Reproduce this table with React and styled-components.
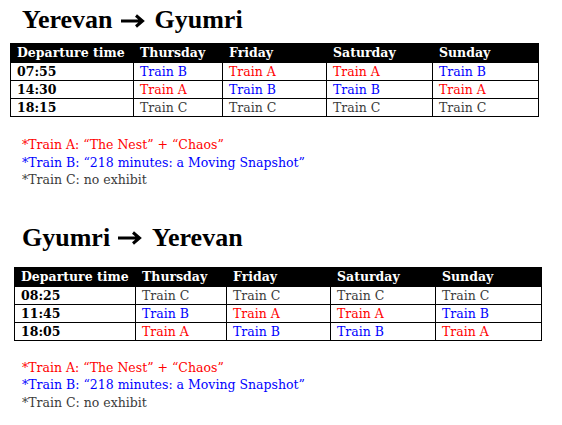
import styled, { createGlobalStyle } from "styled-components";

const GlobalStyle = createGlobalStyle`
  html, body {
    margin: 0;
    padding: 0;
    background: #ffffff;
  }
  body {
    font-family: "DejaVu Serif", "Liberation Serif", serif;
    color: #000;
  }
`;

const Page = styled.div`
  width: 562px;
  height: 425px;
  overflow: hidden;
  padding-top: 5px;
  box-sizing: border-box;
`;

const Section = styled.section`
  margin-bottom: ${({ $gap }) => $gap}px;
`;

const Title = styled.h1`
  display: flex;
  align-items: center;
  margin: 0 0 0 ${({ $left }) => $left}px;
  font-family: "Liberation Serif", "DejaVu Serif", serif;
  font-size: 26px;
  line-height: 30px;
  font-weight: bold;
`;

const ArrowIcon = styled.svg`
  width: 26px;
  height: 14px;
  margin: 1px 9px 0 7px;
  flex: none;
`;

const Table = styled.table`
  margin: ${({ $top }) => $top}px 0 0 ${({ $left }) => $left}px;
  border-collapse: collapse;
  table-layout: fixed;
  font-size: 12.5px;
`;

const HeadCell = styled.th`
  background: #000;
  color: #fff;
  text-align: left;
  font-weight: bold;
  height: 18px;
  padding: 0 0 0 6px;
  border: 1px solid #000;
  line-height: 18px;
  white-space: nowrap;
`;

const TimeCell = styled.td`
  font-weight: bold;
  height: 17px;
  padding: 0 0 0 6px;
  border: 1px solid #000;
  line-height: 17px;
`;

const TRAIN_COLORS = { A: "#ff0000", B: "#0000ff", C: "#3b3b3b" };

const TrainCell = styled.td`
  color: ${({ $train }) => TRAIN_COLORS[$train]};
  height: 17px;
  padding: 0 0 0 6px;
  border: 1px solid #000;
  line-height: 17px;
`;

const Notes = styled.div`
  margin: ${({ $top }) => $top}px 0 0 22px;
  font-size: 12.5px;
  line-height: 17.5px;
`;

const Note = styled.div`
  color: ${({ $train }) => TRAIN_COLORS[$train]};
`;

const DAYS = ["Thursday", "Friday", "Saturday", "Sunday"];

const Arrow = () => (
  <ArrowIcon viewBox="0 0 26 14" aria-hidden="true">
    <path
      d="M1 7 H22 M16 1.5 L22.5 7 L16 12.5"
      fill="none"
      stroke="#000"
      strokeWidth="3"
      strokeLinecap="butt"
      strokeLinejoin="miter"
    />
  </ArrowIcon>
);

const Timetable = ({ from, to, rows, cols, left, tableTop, notesTop, titleLeft }) => (
  <>
    <Title $left={titleLeft}>
      {from}
      <Arrow />
      {to}
    </Title>
    <Table $left={left} $top={tableTop}>
      <colgroup>
        {cols.map((w, i) => (
          <col key={i} style={{ width: w }} />
        ))}
      </colgroup>
      <thead>
        <tr>
          <HeadCell>Departure time</HeadCell>
          {DAYS.map((d) => (
            <HeadCell key={d}>{d}</HeadCell>
          ))}
        </tr>
      </thead>
      <tbody>
        {rows.map(([time, ...trains]) => (
          <tr key={time}>
            <TimeCell>{time}</TimeCell>
            {trains.map((t, i) => (
              <TrainCell key={i} $train={t}>
                Train {t}
              </TrainCell>
            ))}
          </tr>
        ))}
      </tbody>
    </Table>
    <Notes $top={notesTop}>
      <Note $train="A">*Train A: “The Nest” + “Chaos”</Note>
      <Note $train="B">*Train B: “218 minutes: a Moving Snapshot”</Note>
      <Note $train="C">*Train C: no exhibit</Note>
    </Notes>
  </>
);

export default function App() {
  return (
    <Page>
      <GlobalStyle />
      <Section $gap={34}>
        <Timetable
          from="Yerevan"
          to="Gyumri"
          titleLeft={22}
          left={10}
          tableTop={8}
          notesTop={19}
          cols={[123, 89, 104, 106, 106]}
          rows={[
            ["07:55", "B", "A", "A", "B"],
            ["14:30", "A", "B", "B", "A"],
            ["18:15", "C", "C", "C", "C"],
          ]}
        />
      </Section>
      <Section $gap={0}>
        <Timetable
          from="Gyumri"
          to="Yerevan"
          titleLeft={22}
          left={14}
          tableTop={14}
          notesTop={18}
          cols={[121, 91, 104, 105, 106]}
          rows={[
            ["08:25", "C", "C", "C", "C"],
            ["11:45", "B", "A", "A", "B"],
            ["18:05", "A", "B", "B", "A"],
          ]}
        />
      </Section>
    </Page>
  );
}
